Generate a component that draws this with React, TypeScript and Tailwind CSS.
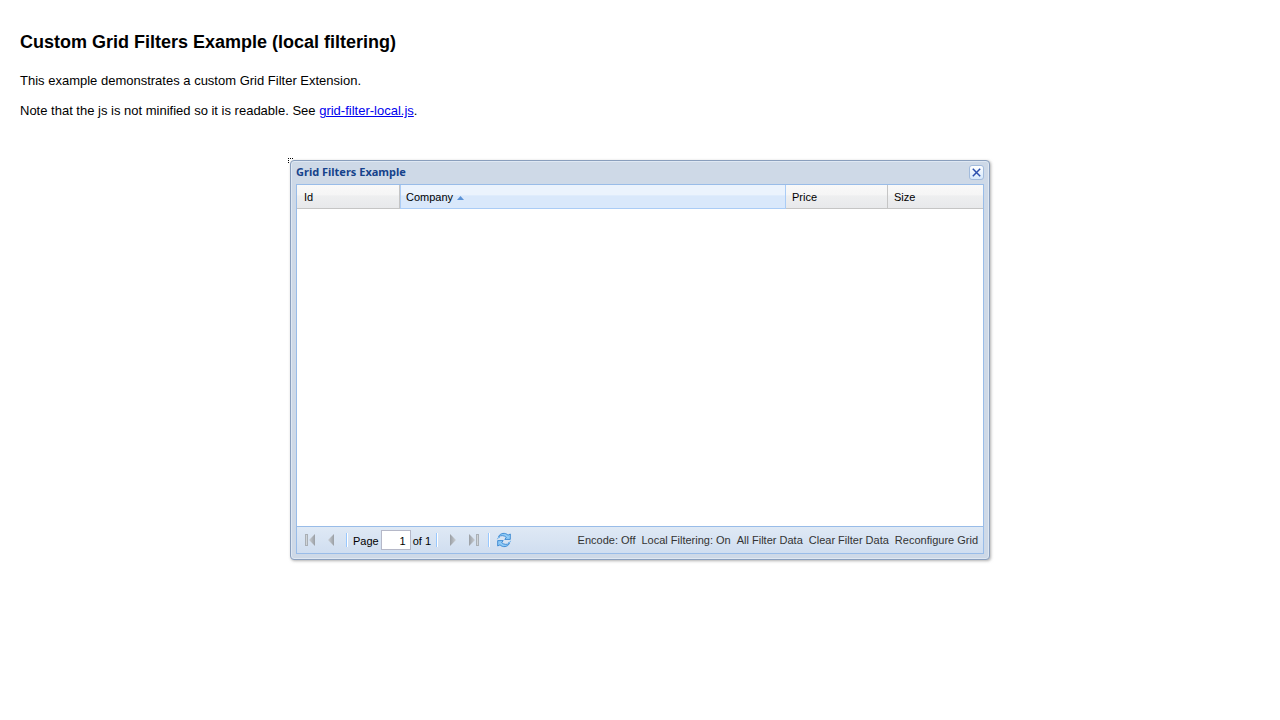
import { useState } from 'react';
import type { ReactNode } from 'react';

const actions = ['Encode: Off', 'Local Filtering: On', 'All Filter Data', 'Clear Filter Data', 'Reconfigure Grid'];

function ArrowGradient({ id }: { id: string }) {
  return (
    <defs>
      <linearGradient id={id} x1="0" x2="1">
        <stop offset="0" stopColor="#c9cdd2" />
        <stop offset="1" stopColor="#9a9fa5" />
      </linearGradient>
    </defs>
  );
}

function FirstIcon({ flip }: { flip?: boolean }) {
  const id = flip ? 'last-fill' : 'first-fill';
  return (
    <svg width="16" height="16" viewBox="0 0 16 16" aria-hidden="true" className={flip ? '-scale-x-100' : ''}>
      <ArrowGradient id={id} />
      <path d="M3 2h3v12H3z" fill="#a9afb5" />
      <path d="M4 3h1v10H4z" fill="#d0d4d8" />
      <path d="M13 2v12L7 8z" fill={`url(#${id})`} />
    </svg>
  );
}

function PrevIcon({ flip }: { flip?: boolean }) {
  const id = flip ? 'next-fill' : 'prev-fill';
  return (
    <svg width="16" height="16" viewBox="0 0 16 16" aria-hidden="true" className={flip ? '-scale-x-100' : ''}>
      <ArrowGradient id={id} />
      <path d="M10 2v12L4 8z" fill={`url(#${id})`} />
    </svg>
  );
}

function RefreshIcon() {
  return (
    <svg width="16" height="16" viewBox="0 0 16 16" aria-hidden="true">
      <g fill="#8fcbf7" stroke="#3585d0" strokeWidth=".9" strokeLinejoin="round">
        <path d="M2.5 4.6C4.3 1 9.3.2 12 3.2L14.3 2V7.4H8.8L10.3 5.4C8.2 3.3 5.4 3.1 2.5 4.6z" />
        <path d="M13.5 11.4C11.7 15 6.7 15.8 4 12.8L1.7 14V8.6H7.2L5.7 10.6C7.8 12.7 10.6 12.9 13.5 11.4z" />
      </g>
      <path d="M1.4 7.2L2.2 5.6L4 5.3M14.6 8.8L13.8 10.4L12 10.7" fill="none" stroke="#6cb2ec" />
    </svg>
  );
}

function IconButton({ label, disabled, children }: { label: string; disabled?: boolean; children: ReactNode }) {
  return (
    <button type="button" aria-label={label} disabled={disabled} className="flex size-[22px] items-center justify-center">
      {children}
    </button>
  );
}

function Separator() {
  return <span className="h-[14px] w-[2px] border-l border-[#98c8ff] bg-white" />;
}

const cell =
  'h-6 border-r border-b border-b-[#c5c5c5] border-r-[#c5c5c5] bg-[linear-gradient(#f9f9f9,#f5f5f5_45%,#eeeff0_46%,#e8e9eb)] px-[6px] pt-[2px] text-left font-normal';

export default function App() {
  const [page, setPage] = useState('1');
  return (
    <main className="p-5 font-['Liberation_Sans',Arial,sans-serif] text-[13px] leading-[15px] text-black">
      <h1 className="pt-3 text-lg leading-5 font-bold">Custom Grid Filters Example (local filtering)</h1>
      <p className="pt-[21px]">This example demonstrates a custom Grid Filter Extension.</p>
      <p className="pt-[15px]">
        Note that the js is not minified so it is readable. See{' '}
        <a href="#grid-filter-local" className="text-[#0000ee] underline">
          grid-filter-local.js
        </a>
        .
      </p>

      <section
        aria-label="Grid Filters Example"
        className="relative mx-auto mt-[42px] flex h-[400px] w-full max-w-[700px] flex-col rounded-[4px] border border-[#8a9fbd] bg-[#ced9e7] px-[5px] pb-[5px] text-[11px] shadow-[inset_0_0_0_1px_#dfe8f3,1px_1px_3px_0px_#888888aa]"
      >
        <span className="absolute -top-[3px] -left-[3px] h-[5px] w-[5px] border-t border-l border-dotted border-black" />
        <header className="flex h-[23px] shrink-0 items-center justify-between">
          <h2 className="pb-[2px] font-['Noto_Sans',Tahoma,sans-serif] text-[11px] font-bold text-[#15428b]">
            Grid Filters Example
          </h2>
          <button
            type="button"
            aria-label="Close"
            className="flex size-[15px] items-center justify-center rounded-[3px] border border-[#a2bbdc] bg-linear-to-b from-white to-[#d5e8fb]"
          >
            <svg width="9" height="9" viewBox="0 0 9 9" aria-hidden="true">
              <path d="M.8.8l7.4 7.4M8.2.8L.8 8.2" stroke="#2b4fae" strokeWidth="1.5" />
            </svg>
          </button>
        </header>

        <div className="flex min-h-0 flex-1 flex-col border border-[#99bce8] bg-white">
          <table className="w-full table-fixed border-separate border-spacing-0 leading-[15px]">
            <colgroup>
              <col className="w-[103px]" />
              <col />
              <col className="w-[102px]" />
              <col className="w-[95px]" />
            </colgroup>
            <thead>
              <tr>
                <th scope="col" className={`${cell} pl-[7px]`}>Id</th>
                <th
                  scope="col"
                  aria-sort="ascending"
                  className="h-6 border-x border-b border-[#aaccf6] bg-[linear-gradient(#ebf3fd,#ebf3fd_45%,#d9e8fb_46%,#d9e8fb)] px-[5px] pt-[2px] text-left font-normal"
                >
                  <span className="flex items-center gap-1">
                    Company
                    <svg width="7" height="4" viewBox="0 0 7 4" aria-hidden="true">
                      <path d="M3.5 0L7 4H0z" fill="#5b92d6" />
                    </svg>
                  </span>
                </th>
                <th scope="col" className={cell}>Price</th>
                <th scope="col" className={`${cell} border-r-0`}>Size</th>
              </tr>
            </thead>
          </table>
          <div className="flex-1" />
          <footer className="flex h-[27px] shrink-0 items-center justify-between border-t border-[#99bce8] bg-linear-to-b from-[#dfe9f5] to-[#d0def0] pr-[5px] pl-[2px]">
            <div className="flex items-center">
              <IconButton label="First Page" disabled><FirstIcon /></IconButton>
              <IconButton label="Previous Page" disabled><PrevIcon /></IconButton>
              <span className="w-[3px]" />
              <Separator />
              <label htmlFor="page" className="pt-[2px] pr-[2px] pl-[5px] text-[11px]">Page</label>
              <input
                id="page"
                value={page}
                onChange={(e) => setPage(e.target.value)}
                className="h-5 w-[30px] border border-[#b5b8c8] bg-white pt-[2px] pr-1 text-right text-[11px]"
              />
              <span className="pt-[2px] pr-[5px] pl-[2px] text-[11px]">of 1</span>
              <Separator />
              <span className="w-[3px]" />
              <IconButton label="Next Page" disabled><PrevIcon flip /></IconButton>
              <IconButton label="Last Page" disabled><FirstIcon flip /></IconButton>
              <span className="w-[3px]" />
              <Separator />
              <span className="w-[3px]" />
              <IconButton label="Refresh"><RefreshIcon /></IconButton>
            </div>
            <div className="flex gap-[6px] text-[11px] text-[#333333]">
              {actions.map((action) => (
                <button key={action} type="button">{action}</button>
              ))}
            </div>
          </footer>
        </div>
      </section>
    </main>
  );
}
